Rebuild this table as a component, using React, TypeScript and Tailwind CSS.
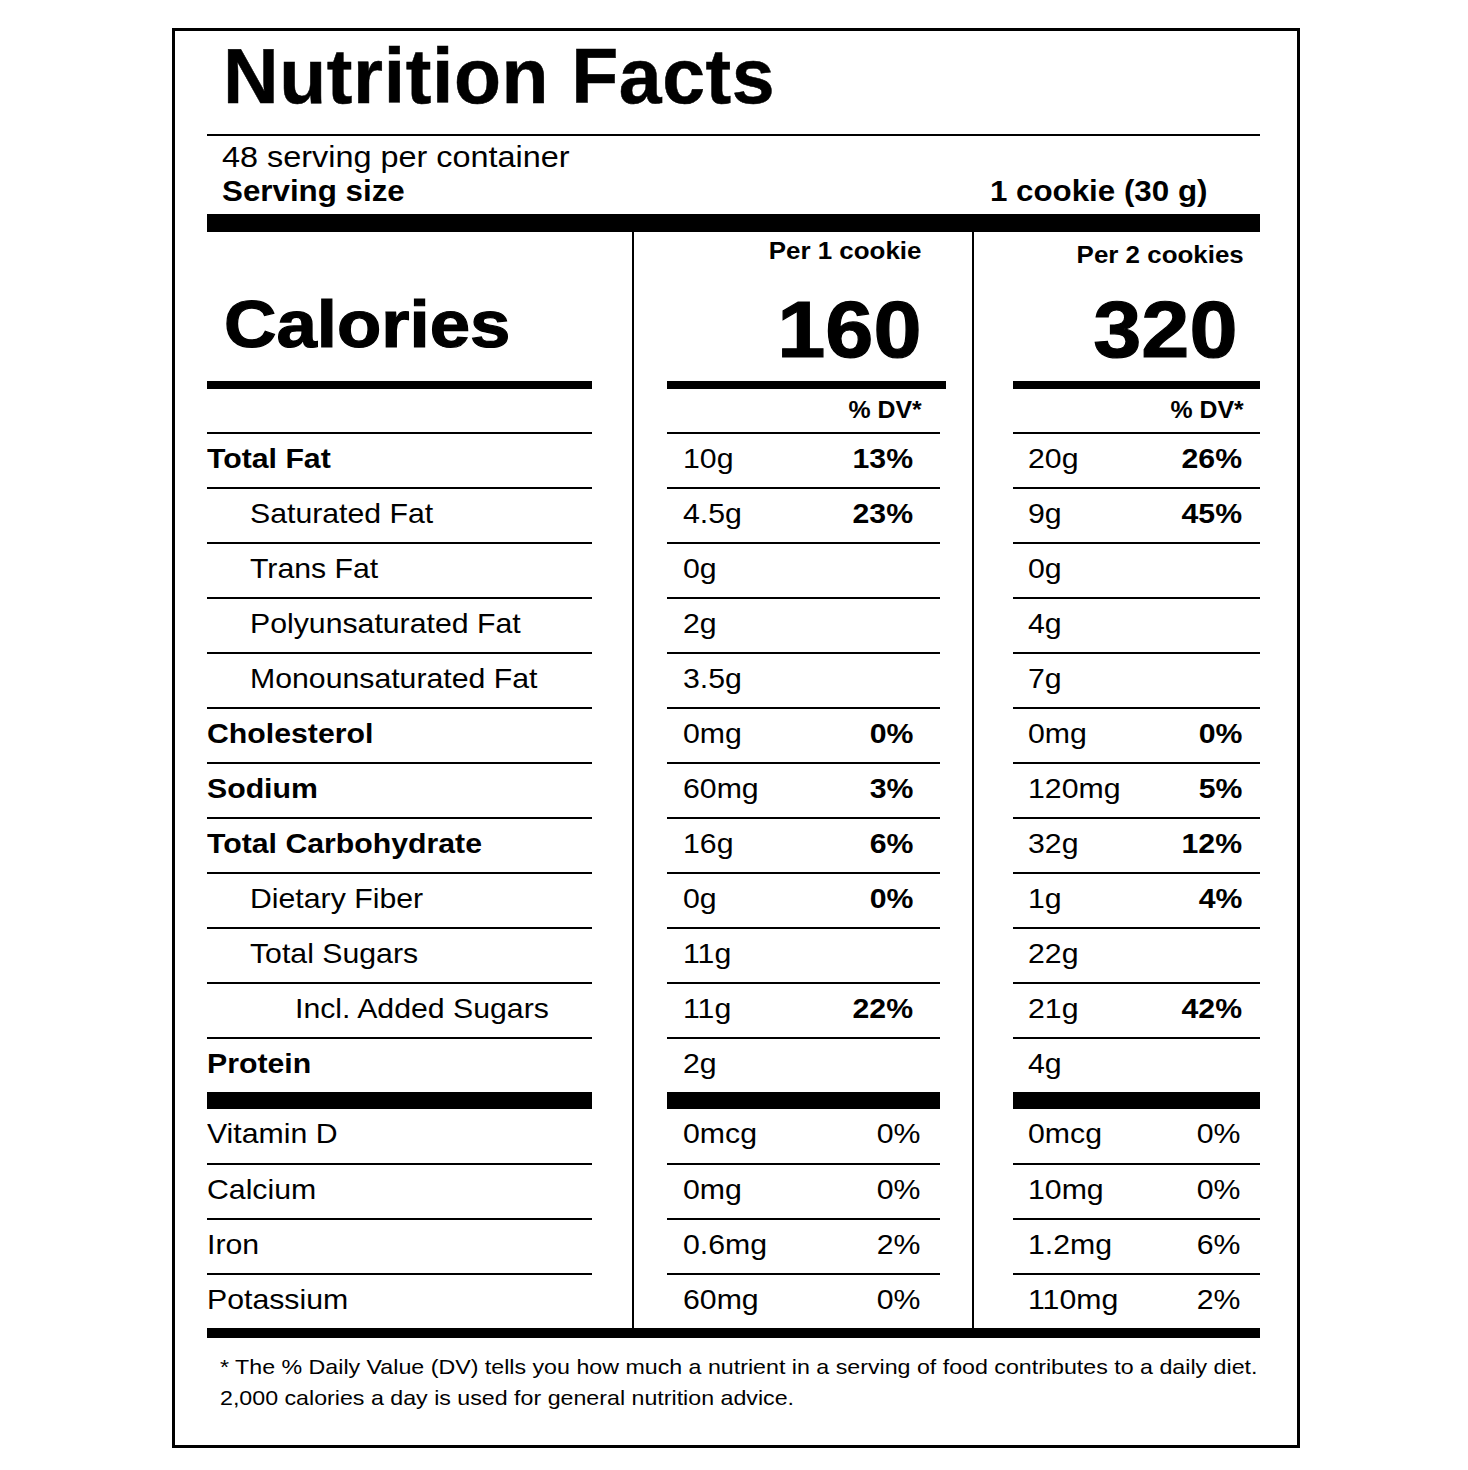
import React from "react";

type Row = {
  label: string;
  b?: boolean;
  ind?: number;
  a: string;
  ap?: string;
  c: string;
  cp?: string;
};

const rows: Row[] = [
  { label: "Total Fat", b: true, a: "10g", ap: "13%", c: "20g", cp: "26%" },
  { label: "Saturated Fat", ind: 1, a: "4.5g", ap: "23%", c: "9g", cp: "45%" },
  { label: "Trans Fat", ind: 1, a: "0g", c: "0g" },
  { label: "Polyunsaturated Fat", ind: 1, a: "2g", c: "4g" },
  { label: "Monounsaturated Fat", ind: 1, a: "3.5g", c: "7g" },
  { label: "Cholesterol", b: true, a: "0mg", ap: "0%", c: "0mg", cp: "0%" },
  { label: "Sodium", b: true, a: "60mg", ap: "3%", c: "120mg", cp: "5%" },
  { label: "Total Carbohydrate", b: true, a: "16g", ap: "6%", c: "32g", cp: "12%" },
  { label: "Dietary Fiber", ind: 1, a: "0g", ap: "0%", c: "1g", cp: "4%" },
  { label: "Total Sugars", ind: 1, a: "11g", c: "22g" },
  { label: "Incl. Added Sugars", ind: 2, a: "11g", ap: "22%", c: "21g", cp: "42%" },
  { label: "Protein", b: true, a: "2g", c: "4g" },
];

const vits = [
  { label: "Vitamin D", a: "0mcg", ap: "0%", c: "0mcg", cp: "0%" },
  { label: "Calcium", a: "0mg", ap: "0%", c: "10mg", cp: "0%" },
  { label: "Iron", a: "0.6mg", ap: "2%", c: "1.2mg", cp: "6%" },
  { label: "Potassium", a: "60mg", ap: "0%", c: "110mg", cp: "2%" },
];

function L({ children, bold }: { children: React.ReactNode; bold?: boolean }) {
  return (
    <span
      className={
        "inline-block whitespace-nowrap origin-left scale-x-[1.08] text-[28px] leading-none " +
        (bold ? "font-bold" : "font-normal")
      }
    >
      {children}
    </span>
  );
}

function R({ children, bold }: { children: React.ReactNode; bold?: boolean }) {
  return (
    <span
      className={
        "inline-block whitespace-nowrap origin-right scale-x-[1.08] text-[28px] leading-none " +
        (bold ? "font-bold" : "font-normal")
      }
    >
      {children}
    </span>
  );
}

function rowCls() {
  return "h-[55px] border-t-2 border-black";
}

function vitCls(i: number) {
  return i === 0 ? "h-[54px]" : "h-[55px] border-t-2 border-black";
}

export default function App() {
  return (
    <div
      className="bg-white w-[1468px] h-[1470px] pt-[28px] pl-[172px] text-black"
      style={{ fontFamily: '"Liberation Sans", Arial, Helvetica, sans-serif' }}
    >
      <div className="w-[1128px] h-[1420px] border-[3px] border-black pl-[32px] pr-[37px] pt-[7px] flex flex-col">
        {/* Title */}
        <div className="pl-[16px] h-[77px] text-[77px] leading-none font-bold whitespace-nowrap tracking-[0.6px] [-webkit-text-stroke:0.5px_black]">
          Nutrition Facts
        </div>
        <div className="mt-[19px] h-[2px] bg-black" />
        <div className="mt-[6px] pl-[15px] h-[30px] flex items-center">
          <span className="inline-block whitespace-nowrap origin-left scale-x-[1.08] text-[30px] leading-none">
            48 serving per container
          </span>
        </div>
        <div className="mt-[5px] pl-[15px] pr-[53px] h-[29px] flex items-center justify-between">
          <span className="inline-block whitespace-nowrap origin-left scale-x-[1.08] text-[29px] leading-none font-bold">
            Serving size
          </span>
          <span className="inline-block whitespace-nowrap origin-right scale-x-[1.08] text-[29px] leading-none font-bold">
            1 cookie (30 g)
          </span>
        </div>
        <div className="mt-[8px] h-[18px] bg-black" />

        {/* Table */}
        <div className="flex">
          {/* Left column */}
          <div className="w-[427px] border-r-2 border-black flex flex-col">
            <div className="h-[149px] pt-[59px] pl-[17px]">
              <span className="inline-block whitespace-nowrap origin-left scale-x-[1.1] text-[66px] leading-none font-bold [-webkit-text-stroke:1.2px_black]">
                Calories
              </span>
            </div>
            <div className="w-[385px] h-[8px] bg-black" />
            <div className="w-[385px] h-[43px]" />
            {rows.map((r) => (
              <div
                key={r.label}
                className={
                  "w-[385px] flex items-center pb-[4px] " +
                  rowCls() +
                  (r.ind === 2 ? " pl-[88px]" : r.ind === 1 ? " pl-[43px]" : " pl-0")
                }
              >
                <L bold={r.b}>{r.label}</L>
              </div>
            ))}
            <div className="w-[385px] h-[17px] bg-black" />
            {vits.map((v, i) => (
              <div key={v.label} className={"w-[385px] flex items-center pb-[4px] " + vitCls(i)}>
                <L>{v.label}</L>
              </div>
            ))}
          </div>

          {/* Middle column */}
          <div className="w-[340px] border-r-2 border-black pl-[33px] pr-[32px] flex flex-col">
            <div className="h-[149px] flex flex-col items-end pr-[19px]">
              <div className="mt-[7px] h-[24px] flex items-center">
                <span className="inline-block whitespace-nowrap origin-right scale-x-[1.08] text-[24px] leading-none font-bold">
                  Per 1 cookie
                </span>
              </div>
              <div className="mt-[27px] h-[80px] flex items-center">
                <span className="inline-block whitespace-nowrap origin-right scale-x-[1.08] text-[80px] leading-none font-bold [-webkit-text-stroke:1.2px_black]">
                  160
                </span>
              </div>
            </div>
            <div className="w-[279px] h-[8px] bg-black" />
            <div className="h-[43px] flex items-center justify-end pr-[18px]">
              <span className="inline-block whitespace-nowrap origin-right scale-x-[1.08] text-[23px] leading-none font-bold">
                % DV*
              </span>
            </div>
            {rows.map((r) => (
              <div
                key={r.label}
                className={"flex items-center justify-between pl-[16px] pr-[27px] pb-[4px] " + rowCls()}
              >
                <L>{r.a}</L>
                {r.ap ? <R bold>{r.ap}</R> : <span />}
              </div>
            ))}
            <div className="h-[17px] bg-black" />
            {vits.map((v, i) => (
              <div
                key={v.label}
                className={"flex items-center justify-between pl-[16px] pr-[20px] pb-[4px] " + vitCls(i)}
              >
                <L>{v.a}</L>
                <R>{v.ap}</R>
              </div>
            ))}
          </div>

          {/* Right column */}
          <div className="w-[286px] pl-[39px] flex flex-col">
            <div className="h-[149px] flex flex-col items-end">
              <div className="mt-[11px] h-[24px] flex items-center pr-[16px]">
                <span className="inline-block whitespace-nowrap origin-right scale-x-[1.08] text-[24px] leading-none font-bold">
                  Per 2 cookies
                </span>
              </div>
              <div className="mt-[23px] h-[80px] flex items-center pr-[23px]">
                <span className="inline-block whitespace-nowrap origin-right scale-x-[1.08] text-[80px] leading-none font-bold [-webkit-text-stroke:1.2px_black]">
                  320
                </span>
              </div>
            </div>
            <div className="h-[8px] bg-black" />
            <div className="h-[43px] flex items-center justify-end pr-[16px]">
              <span className="inline-block whitespace-nowrap origin-right scale-x-[1.08] text-[23px] leading-none font-bold">
                % DV*
              </span>
            </div>
            {rows.map((r) => (
              <div
                key={r.label}
                className={"flex items-center justify-between pl-[15px] pr-[18px] pb-[4px] " + rowCls()}
              >
                <L>{r.c}</L>
                {r.cp ? <R bold>{r.cp}</R> : <span />}
              </div>
            ))}
            <div className="h-[17px] bg-black" />
            {vits.map((v, i) => (
              <div
                key={v.label}
                className={"flex items-center justify-between pl-[15px] pr-[20px] pb-[4px] " + vitCls(i)}
              >
                <L>{v.c}</L>
                <R>{v.cp}</R>
              </div>
            ))}
          </div>
        </div>
        <div className="h-[10px] bg-black" />

        {/* Footnote */}
        <div className="mt-[13px] pl-[13px]">
          <div className="h-[31px] flex items-center">
            <span className="inline-block whitespace-nowrap origin-left scale-x-[1.105] text-[21px] leading-none">
              * The % Daily Value (DV) tells you how much a nutrient in a serving of food contributes to a daily diet.
            </span>
          </div>
          <div className="h-[31px] flex items-center">
            <span className="inline-block whitespace-nowrap origin-left scale-x-[1.105] text-[21px] leading-none">
              2,000 calories a day is used for general nutrition advice.
            </span>
          </div>
        </div>
      </div>
    </div>
  );
}
